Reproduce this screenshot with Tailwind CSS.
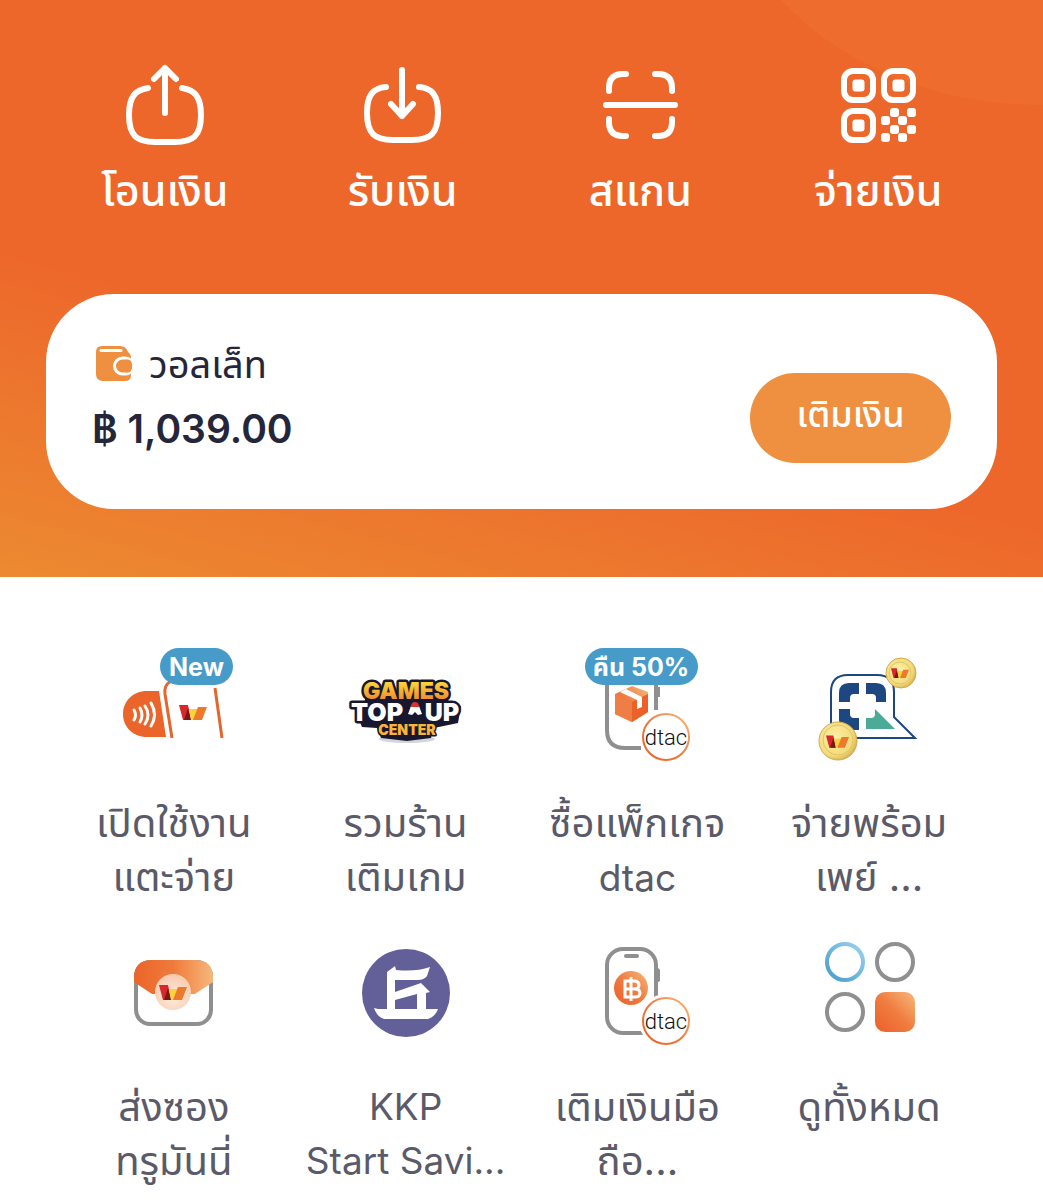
<!DOCTYPE html>
<html lang="th">
<head>
<meta charset="utf-8">
<meta name="viewport" content="width=device-width, initial-scale=1">
<title>วอลเล็ท</title>
<script src="https://cdn.jsdelivr.net/npm/@tailwindcss/browser@4"></script>
</head>
<body class="bg-white font-['Inter','Noto_Sans_Thai','Noto_Sans',sans-serif] text-[#5b5a68]">
<svg width="0" height="0" class="absolute" aria-hidden="true">
  <defs>
    <linearGradient id="orange" x1="0" y1="1" x2="1" y2="0"><stop offset="0" stop-color="#ec5f28"/><stop offset=".5" stop-color="#f07c40"/><stop offset="1" stop-color="#f8b97c"/></linearGradient>
    <linearGradient id="flap" x1="0" y1="0" x2="1" y2="0"><stop offset="0" stop-color="#eb6429"/><stop offset=".5" stop-color="#ef7b3b"/><stop offset="1" stop-color="#f6b87c"/></linearGradient>
    <linearGradient id="blue" x1="0" y1="1" x2="1" y2="0"><stop offset="0" stop-color="#479bc9"/><stop offset="1" stop-color="#9ad3f0"/></linearGradient>
    <linearGradient id="gold" gradientUnits="userSpaceOnUse" x1="0" y1="681" x2="0" y2="700"><stop offset="0" stop-color="#ffd93b"/><stop offset="1" stop-color="#f08a2c"/></linearGradient>
    <radialGradient id="coin" cx=".4" cy=".4" r=".7"><stop offset="0" stop-color="#fdf2a8"/><stop offset=".7" stop-color="#f2da7a"/><stop offset="1" stop-color="#c99d3c"/></radialGradient>
    <radialGradient id="peach" cx=".5" cy=".65" r=".6"><stop offset="0" stop-color="#fdebdc"/><stop offset="1" stop-color="#f8ccb0"/></radialGradient>
    <symbol id="mark" viewBox="0 0 28 16">
      <path d="M0 0h9l3 15H4z" fill="#d8282c"/><path d="M9 3l3 12H5z" fill="#7c1718"/>
      <path d="M10 4h9l-3 11h-4z" fill="#fbd23c"/><path d="M19 2h9l-5 13h-9z" fill="#ec7a2c"/>
    </symbol>
  </defs>
</svg>

<header class="relative overflow-hidden bg-[#ed672b] bg-[linear-gradient(195deg,#ed672b_62%,#ec8a31_100%)] px-[46px] pt-[60px] pb-[68px]">
  <div class="absolute -top-[405px] -right-[317px] h-[510px] w-[640px] rounded-[50%] bg-[#ee6c2d]"></div>
  <nav class="relative grid grid-cols-4 text-center text-[43px] leading-[60px] font-medium text-white">
    <a href="#" class="flex flex-col items-center gap-[10px]">
      <svg width="90" height="90" viewBox="120 60 90 90" fill="none" stroke="currentColor" stroke-width="6" stroke-linecap="round" stroke-linejoin="round" aria-hidden="true"><path d="M165 113V68M154 79l11-11 11 11M148 88C135 90 129 97 129 115c0 21 8 27 26 27h20c18 0 26-6 26-27 0-18-6-25-19-27"/></svg>
      <span>โอนเงิน</span>
    </a>
    <a href="#" class="flex flex-col items-center gap-[10px]">
      <svg width="90" height="90" viewBox="358 60 90 90" fill="none" stroke="currentColor" stroke-width="6" stroke-linecap="round" stroke-linejoin="round" aria-hidden="true"><path d="M402 70v46M391 104l11 12 11-12M386 87C373 88 367 95 367 113c0 21 8 27 26 27h19c18 0 26-6 26-27 0-18-6-25-19-26"/></svg>
      <span>รับเงิน</span>
    </a>
    <a href="#" class="flex flex-col items-center gap-[10px]">
      <svg width="90" height="90" viewBox="595 60 90 90" fill="none" stroke="currentColor" stroke-width="6" stroke-linecap="round" stroke-linejoin="round" aria-hidden="true"><path d="M606 105h69M609 91v-3q0-14 14-14h3M655 74h3q14 0 14 14v3M609 119v3q0 14 14 14h3M655 136h3q14 0 14-14v-3"/></svg>
      <span>สแกน</span>
    </a>
    <a href="#" class="flex flex-col items-center gap-[10px]">
      <svg width="90" height="90" viewBox="833 60 90 90" fill="currentColor" aria-hidden="true">
        <g fill="none" stroke="currentColor" stroke-width="6"><rect x="844" y="71" width="29" height="29" rx="9"/><rect x="884" y="71" width="29" height="29" rx="9"/><rect x="844" y="111" width="29" height="29" rx="9"/></g>
        <rect x="852.500" y="79.500" width="12" height="12" rx="3"/><rect x="892.500" y="79.500" width="12" height="12" rx="3"/><rect x="852.500" y="119.500" width="12" height="12" rx="3"/>
        <rect x="890" y="108" width="9" height="9" rx="3"/><rect x="907" y="108" width="9" height="9" rx="3"/><rect x="881" y="116" width="9" height="9" rx="3"/><rect x="898" y="116" width="9" height="9" rx="3"/><rect x="890" y="125" width="9" height="9" rx="3"/><rect x="907" y="125" width="9" height="9" rx="3"/><rect x="881" y="133" width="9" height="9" rx="3"/><rect x="898" y="133" width="9" height="9" rx="3"/>
      </svg>
      <span>จ่ายเงิน</span>
    </a>
  </nav>

  <section class="relative mt-[74px] flex items-center justify-between rounded-[68px] bg-white px-[46px] pt-[40px] pb-[46px] text-[#26263a]">
    <div>
      <div class="flex items-center gap-4 pl-1 text-[38px] leading-[60px]">
        <svg width="37" height="36" viewBox="0 0 37 36" aria-hidden="true"><path d="M6 0h18q6 0 8 6 3 2 3 6v17q0 6-6 6H7q-7 0-7-7V6q0-6 6-6z" fill="#ef8f40"/><path d="M5 4.500h20" stroke="#fff" stroke-width="3" stroke-linecap="round"/><rect x="18.500" y="12" width="19" height="16" rx="8" fill="#ef8f40" stroke="#fff" stroke-width="3"/><path d="M30 13.500h2q4 0 4 6.500t-4 6.500h-2z" fill="#ef8f40"/></svg>
        <h2>วอลเล็ท</h2>
      </div>
      <p class="text-[39px] leading-[69px] font-semibold">฿ 1,039.00</p>
    </div>
    <button class="mt-[39px] h-[90px] w-[201px] self-start rounded-full bg-[#ef8f40] pb-2 text-[36px] font-medium text-white">เติมเงิน</button>
  </section>
</header>

<main class="grid grid-cols-4 gap-y-[19px] px-[58px] pt-[63px] text-center text-[40px] leading-[54px]">
  <a href="#" class="relative flex flex-col items-center gap-7">
    <svg width="128" height="128" viewBox="110 640 128 128" aria-hidden="true">
      <path d="M159 691l7 46h-19c-14 0-24-10-24-23s10-23 24-23z" fill="#eb6429"/>
      <g fill="none" stroke="#fff" stroke-width="3" stroke-linecap="round"><path d="M134 710q3 5 0 10M140 708q4 7 0 14M145 706q6 9 0 18M151 703q7 12 0 23"/></g>
      <path d="M172 738l-7-44q-1-9 5-12M215 688l7 50" fill="none" stroke="#e4662f" stroke-width="3"/>
      <use href="#mark" x="179" y="705" width="28" height="16"/>
    </svg>
    <span class="absolute top-2 left-[102px] h-[37px] w-[73px] rounded-full bg-[#479bc9] text-[25px] leading-[38px] font-bold text-white">New</span>
    <span>เปิดใช้งาน<br>แตะจ่าย</span>
  </a>
  <a href="#" class="flex flex-col items-center gap-7">
    <svg width="128" height="128" viewBox="342 640 128 128" font-family="Inter, sans-serif" font-weight="900" text-anchor="middle" stroke-linejoin="round" paint-order="stroke" role="img">
      <ellipse cx="407" cy="739" rx="28" ry="4" fill="#d4d4da"/>
      <path d="M367 693h78l4 9 12 4-3 17-24 5-3 10-24 3-26-3-4-10-15-1-8-20 10-4z" fill="#17182f"/>
      <text stroke="#17182f" stroke-width="5"><tspan x="406" y="699" font-size="23" fill="url(#gold)">GAMES</tspan><tspan x="377" y="721" font-size="25" fill="#fff">TOP</tspan><tspan x="442" y="721" font-size="25" fill="#fff">UP</tspan><tspan x="407" y="735" font-size="14" fill="#fbb43a" stroke-width="3">CENTER</tspan></text>
      <path d="M408 714l3-8q4-3 8 0l3 8-4 1-3-3-3 3z" fill="#fff"/><path d="M411 707q0-5 4-5t4 5z" fill="#d7352c"/>
    </svg>
    <span>รวมร้าน<br>เติมเกม</span>
  </a>
  <a href="#" class="relative flex flex-col items-center gap-7">
    <svg width="128" height="128" viewBox="573 640 128 128" aria-hidden="true">
      <path d="M607 685v45q0 18 18 18h16M656 685v25" fill="none" stroke="#8f8f8f" stroke-width="4"/><path d="M657 687h3v10h-3z" fill="#8f8f8f"/>
      <path d="M632 686l16 6v20l-16 10-17-8v-20z" fill="url(#orange)"/><path d="M615 694l17 8v20l-17-8z" fill="#ef7d46"/><path d="M632 702l16-8v18l-16 10z" fill="#ea6229"/>
      <path d="M620 692l6-3 16 8v10l-5 2v-9z" fill="#fff"/>
      <circle cx="666" cy="737" r="26" fill="#fff"/><circle cx="666" cy="737" r="23" fill="#fff" stroke="url(#orange)" stroke-width="2"/>
      <text x="666" y="745" text-anchor="middle" font-family="Roboto, sans-serif" font-weight="300" font-size="22" fill="#111">dtac</text>
    </svg>
    <span class="absolute top-2 left-[63px] h-[37px] w-[113px] rounded-full bg-[#479bc9] text-[25px] leading-[38px] font-bold text-white">คืน 50%</span>
    <span>ซื้อแพ็กเกจ<br><span class="text-[37px]">dtac</span></span>
  </a>
  <a href="#" class="flex flex-col items-center gap-7">
    <svg width="128" height="128" viewBox="806 640 128 128" aria-hidden="true">
      <path d="M832 738v-46q0-17 17-17h29q17 0 17 17v25l21 21z" fill="#fff" stroke="#1d4780" stroke-width="2"/>
      <g fill="#1d4780"><path d="M840 702v-9q0-10 10-10h10v11h-5q-4 0-4 4v4zM867 683h10q10 0 10 10v9h-10v-4q0-4-4-4h-6zM840 709h11v5q0 4 4 4h5v12h-10q-10 0-10-10z"/></g>
      <path d="M876 709l20 20h-29v-11h5q4 0 4-4z" fill="#4bab98"/>
      <circle cx="902" cy="673" r="15" fill="url(#coin)" stroke="#d3aa4a"/><circle cx="901" cy="673" r="11" fill="none" stroke="#e2c362"/><use href="#mark" x="892" y="668" width="18" height="11"/>
      <circle cx="839" cy="741" r="19" fill="url(#coin)" stroke="#d3aa4a"/><circle cx="839" cy="740" r="15" fill="none" stroke="#e2c362"/><use href="#mark" x="827" y="735" width="23" height="14"/>
    </svg>
    <span>จ่ายพร้อม<br>เพย์ ...</span>
  </a>
  <a href="#" class="flex flex-col items-center gap-7">
    <svg width="128" height="128" viewBox="110 923 128 128" aria-hidden="true">
      <rect x="136" y="961" width="75" height="62" rx="14" fill="#fff" stroke="#8f8f8f" stroke-width="4"/>
      <path d="M134 981v-4q0-18 18-18h43q18 0 18 18v4l-18 12h-43z" fill="url(#flap)"/><path d="M152 993h43v3h-43z" fill="#fff"/>
      <circle cx="173" cy="991" r="18" fill="url(#peach)"/><use href="#mark" x="159" y="984" width="28" height="16"/>
    </svg>
    <span>ส่งซอง<br>ทรูมันนี่</span>
  </a>
  <a href="#" class="flex flex-col items-center gap-7">
    <svg width="128" height="128" viewBox="342 923 128 128" aria-hidden="true">
      <circle cx="406" cy="992" r="44" fill="#635f98"/>
      <path d="M387 1008v-37l8-6 1 4q20 2 34-3l-3 9q-3 4-9 4h-23v12l26-9 9 9-4 1v16h12q-3 8-10 10h-44q-7-2-10-11l4 1zM395 999v9h22v-15z" fill="#fff" fill-rule="evenodd"/>
    </svg>
    <span class="text-[37px] whitespace-nowrap">KKP<br>Start Savi...</span>
  </a>
  <a href="#" class="flex flex-col items-center gap-7">
    <svg width="128" height="128" viewBox="573 923 128 128" aria-hidden="true">
      <rect x="607" y="948" width="49" height="84" rx="16" fill="#fff" stroke="#8f8f8f" stroke-width="4"/><path d="M657 967q3 0 3 3v9q0 2-3 2z" fill="#8f8f8f"/>
      <path d="M626 955h11" stroke="#8f8f8f" stroke-width="4" stroke-linecap="round"/>
      <circle cx="631" cy="987" r="17" fill="url(#orange)"/>
      <path d="M631 976v24M625 980h9q5 0 5 4t-5 4h-9 10q5 0 5 4t-5 4h-10z" fill="none" stroke="#fff" stroke-width="3"/>
      <circle cx="666" cy="1020" r="27" fill="#fff"/><circle cx="666" cy="1020" r="23" fill="#fff" stroke="url(#orange)" stroke-width="2"/>
      <text x="666" y="1028" text-anchor="middle" font-family="Roboto, sans-serif" font-weight="300" font-size="22" fill="#111">dtac</text>
    </svg>
    <span>เติมเงินมือ<br>ถือ...</span>
  </a>
  <a href="#" class="flex flex-col items-center gap-7">
    <svg width="128" height="128" viewBox="805 923 128 128" fill="none" stroke="#8f8f8f" stroke-width="4" aria-hidden="true">
      <circle cx="845" cy="961" r="18" stroke="url(#blue)"/><circle cx="895" cy="961" r="18"/><circle cx="845" cy="1011" r="18"/><rect x="875" y="991" width="40" height="40" rx="10" fill="url(#orange)" stroke="none"/>
    </svg>
    <span>ดูทั้งหมด</span>
  </a>
</main>
</body>
</html>
